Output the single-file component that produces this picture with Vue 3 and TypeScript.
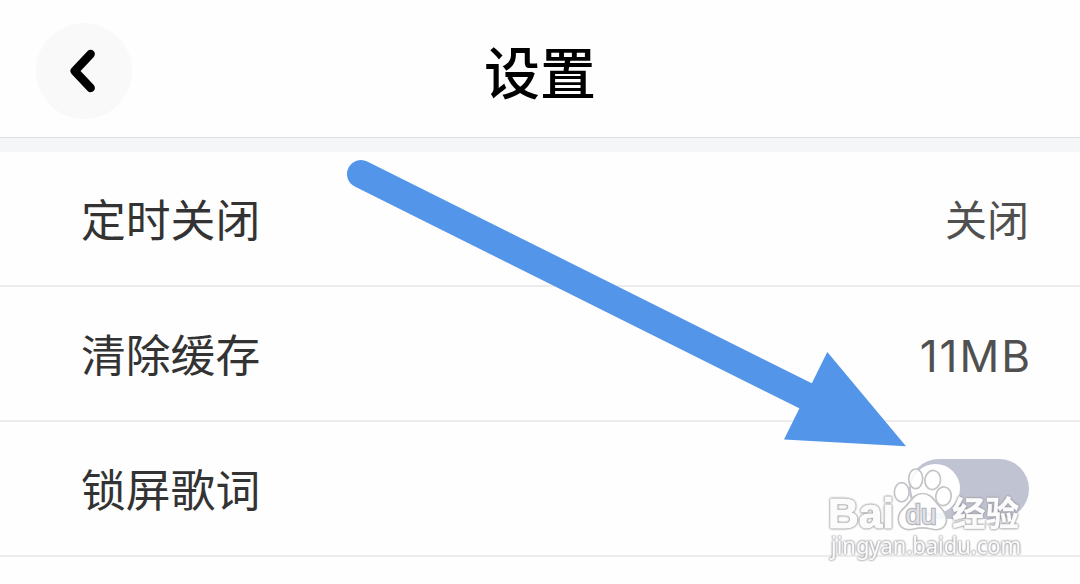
<script setup lang="ts">
interface Setting {
  label: string
  value?: string
  latin?: boolean
}

const settings: Setting[] = [
  { label: '定时关闭', value: '关闭' },
  { label: '清除缓存', value: '11MB', latin: true },
  { label: '锁屏歌词' },
]
</script>

<template>
  <main class="screen">
    <header class="bar">
      <button class="back" aria-label="返回">
        <svg width="96" height="96" viewBox="0 0 96 96">
          <path d="M54.7 31 L38.7 48 L54.7 65" />
        </svg>
      </button>
      <h1 class="title">设置</h1>
    </header>
    <div class="gap"></div>
    <section class="list">
      <div v-for="s in settings" :key="s.label" class="row">
        <span class="label">{{ s.label }}</span>
        <span v-if="s.value" class="value" :class="{ latin: s.latin }">{{ s.value }}</span>
        <span v-else class="toggle" role="switch" aria-checked="false"><i class="knob"></i></span>
      </div>
    </section>

    <svg class="overlay" width="1080" height="584" viewBox="0 0 1080 584">
      <path class="shaft" d="M361 174 L812 399" />
      <path class="head" d="M827.3 352 L906 446.3 L784 439.6 Z" />
      <g class="paw">
        <ellipse cx="901.7" cy="492.3" rx="7.4" ry="9.6" />
        <ellipse cx="915.7" cy="478.8" rx="7" ry="9.8" />
        <ellipse cx="932.7" cy="480" rx="7.8" ry="9.6" transform="rotate(8 932.7 480)" />
        <ellipse cx="943.5" cy="496.3" rx="7.7" ry="9.4" transform="rotate(8 943.5 496.3)" />
        <path d="M922.5 493.5 C913 493.5 911 502 904 508 C898 513 897.5 518 899 523 C901 529.5 908 530.5 914 529 C920 527.4 925 527.4 931 529 C938 531 944 529 946 523 C948 516 944 511 940 507 C934 501 932 493.5 922.5 493.5 Z" />
      </g>
      <text class="du" x="905.5" y="524" textLength="31" lengthAdjust="spacingAndGlyphs">du</text>
      <g class="mark">
        <text class="brand" x="828" y="528.3" textLength="66" lengthAdjust="spacingAndGlyphs">Bai</text>
        <text class="cn" x="952" y="526" textLength="67" lengthAdjust="spacingAndGlyphs">经验</text>
        <text class="url" x="831" y="554" textLength="190" lengthAdjust="spacingAndGlyphs">jingyan.baidu.com</text>
      </g>
    </svg>
  </main>
</template>

<style>
body {
  margin: 0;
  background: #fefefe;
}
</style>

<style scoped>
.screen {
  position: relative;
  width: 1080px;
  height: 584px;
  overflow: hidden;
  background: #fefefe;
  font-family: "Noto Sans CJK SC", sans-serif;
}
.bar {
  display: grid;
  grid-template-columns: 96px 1fr 96px;
  align-items: center;
  box-sizing: border-box;
  height: 138px;
  padding: 0 36px;
  border-bottom: 1px solid #dedede;
}
.back {
  width: 96px;
  height: 96px;
  margin-top: 5px;
  padding: 0;
  border: 0;
  border-radius: 50%;
  background: #f9f9f9;
}
.back svg {
  display: block;
  fill: none;
  stroke: #000;
  stroke-width: 8.4;
  stroke-linecap: round;
  stroke-linejoin: round;
}
.title {
  margin: 2px 0 0;
  font-size: 56px;
  font-weight: 500;
  line-height: 80px;
  text-align: center;
  color: #000;
}
.gap {
  height: 14px;
  background: #f5f6f7;
}
.row {
  display: flex;
  align-items: center;
  justify-content: space-between;
  box-sizing: border-box;
  height: 135px;
  padding: 0 51px 0 81px;
  border-bottom: 2px solid #ececec;
}
.label {
  padding-bottom: 2px;
  font-size: 44.8px;
  line-height: 66px;
  color: #333;
}
.value {
  padding-bottom: 2px;
  font-size: 42px;
  line-height: 62px;
  color: #505050;
}
.latin {
  padding: 5px 0 0;
  font-family: Inter, sans-serif;
  font-size: 44px;
  font-kerning: none;
  letter-spacing: 2px;
  margin-right: -3px;
}
.toggle {
  display: flex;
  align-items: center;
  box-sizing: border-box;
  width: 120px;
  height: 60px;
  padding-left: 2px;
  border-radius: 30px;
  background: #bfc3d2;
}
.knob {
  width: 49px;
  height: 49px;
  border-radius: 50%;
  background: #fff;
}
.overlay {
  position: absolute;
  inset: 0;
}
.shaft {
  stroke: #5395e9;
  stroke-width: 28;
  stroke-linecap: round;
}
.head {
  fill: #5395e9;
}
.paw {
  fill: rgba(255, 255, 255, 0.86);
  stroke: #c4c4c7;
  stroke-width: 1.7;
}
.mark {
  fill: #fcfcfd;
  stroke: #fcfcfd;
  stroke-linejoin: round;
  filter: drop-shadow(0 0 0.8px #88888e) drop-shadow(0 0 0.6px #b4b4b8);
}
.brand {
  font: 700 43px "Liberation Sans", sans-serif;
  stroke-width: 1.2;
}
.du {
  font: 400 28px "Liberation Sans", sans-serif;
  fill: #dfe0e6;
  stroke: #b4b4ba;
  stroke-width: 2.4;
  paint-order: stroke;
}
.cn {
  font: 700 34px "Noto Sans CJK SC", sans-serif;
  stroke-width: 0.4;
}
.url {
  font: 400 23px "Noto Sans", sans-serif;
  stroke-width: 0.2;
}
</style>
